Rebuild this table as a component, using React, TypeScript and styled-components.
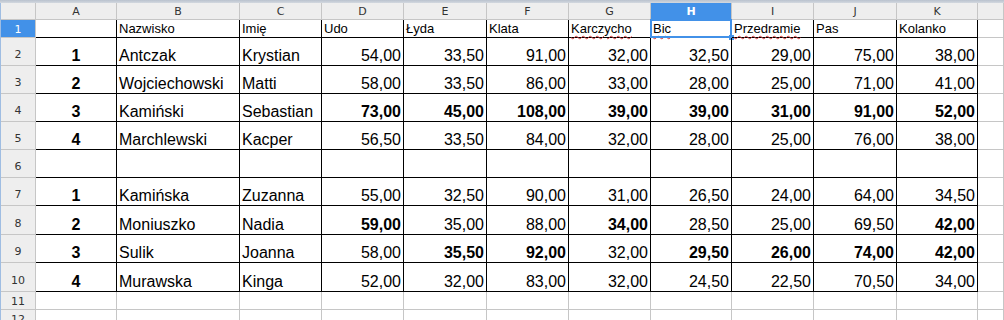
import React from 'react';
import styled, { createGlobalStyle, css } from 'styled-components';

const GlobalStyle = createGlobalStyle`
  html, body {
    margin: 0;
    padding: 0;
    background: #ffffff;
    overflow: hidden;
  }
  body {
    font-family: "Liberation Sans", Arial, sans-serif;
  }
`;

const GRID = '#c6c6c6';
const SELECT = '#4291e8';

const colWidths = [35, 81, 123, 82, 82, 83, 82, 82, 81, 82, 83, 81, 26];
const rowHeights = [17, 18, 28, 28, 28, 28, 28, 28, 29, 28, 29, 18, 18];

const Window = styled.div`
  width: 1004px;
  height: 320px;
  overflow: hidden;
  display: flex;
  flex-direction: column;
`;

const TopStrip = styled.div`
  height: 3px;
  flex: none;
  background: linear-gradient(#b9c2ce, #d3d8df);
`;

const Sheet = styled.div`
  display: grid;
  grid-template-columns: ${colWidths.map((w) => `${w}px`).join(' ')};
  grid-template-rows: ${rowHeights.map((h) => `${h}px`).join(' ')};
  border-left: 1px solid #9fbde2;
`;

const HeaderCell = styled.div<{ $active?: boolean }>`
  box-sizing: border-box;
  display: flex;
  align-items: center;
  justify-content: center;
  background: ${(p) => (p.$active ? SELECT : '#eeeeee')};
  color: ${(p) => (p.$active ? '#ffffff' : '#333333')};
  font-weight: ${(p) => (p.$active ? 'bold' : 'normal')};
  font-family: "DejaVu Sans", "Liberation Sans", sans-serif;
  font-size: 11px;
  border-right: 1px solid ${GRID};
  border-bottom: 1px solid ${GRID};
`;

const RowHead = styled(HeaderCell)<{ $tall?: boolean }>`
  align-items: flex-end;
  padding-bottom: ${(p) => (p.$tall ? '4px' : '1px')};
  font-weight: normal;
`;

const Cell = styled.div<{
  $framed?: boolean;
  $align?: 'left' | 'right' | 'center';
  $bold?: boolean;
  $small?: boolean;
}>`
  position: relative;
  box-sizing: border-box;
  display: flex;
  align-items: flex-end;
  justify-content: ${(p) =>
    p.$align === 'right' ? 'flex-end' : p.$align === 'center' ? 'center' : 'flex-start'};
  padding: 0 2px 0 2px;
  overflow: visible;
  white-space: nowrap;
  color: #000000;
  font-size: ${(p) => (p.$small ? '13px' : '16px')};
  line-height: ${(p) => (p.$small ? '16px' : '18px')};
  font-weight: ${(p) => (p.$bold ? 'bold' : 'normal')};
  border-right: 1px solid ${(p) => (p.$framed ? '#000000' : GRID)};
  border-bottom: 1px solid ${(p) => (p.$framed ? '#000000' : GRID)};
`;

const Text = styled.span<{ $wavy?: boolean }>`
  ${(p) =>
    p.$wavy &&
    css`
      text-decoration: underline wavy #d43a3a;
      text-decoration-thickness: 1px;
      text-underline-offset: 2px;
    `}
`;

const Cursor = styled.div`
  position: absolute;
  left: -1px;
  top: -1px;
  right: -1px;
  bottom: -1px;
  border: 2px solid ${SELECT};
  pointer-events: none;

  &::after {
    content: '';
    position: absolute;
    right: -4px;
    bottom: -4px;
    width: 5px;
    height: 5px;
    background: ${SELECT};
  }
`;

const columns = ['A', 'B', 'C', 'D', 'E', 'F', 'G', 'H', 'I', 'J', 'K', ''];

const titles = ['', 'Nazwisko', 'Imię', 'Udo', 'Łyda', 'Klata', 'Karczycho', 'Bic', 'Przedramie', 'Pas', 'Kolanko'];
const wavy = ['Karczycho', 'Bic', 'Przedramie'];

// "*" marks a bold value
const data: string[][] = [
  ['1', 'Antczak', 'Krystian', '54,00', '33,50', '91,00', '32,00', '32,50', '29,00', '75,00', '38,00'],
  ['2', 'Wojciechowski', 'Matti', '58,00', '33,50', '86,00', '33,00', '28,00', '25,00', '71,00', '41,00'],
  ['3', 'Kamiński', 'Sebastian', '*73,00', '*45,00', '*108,00', '*39,00', '*39,00', '*31,00', '*91,00', '*52,00'],
  ['4', 'Marchlewski', 'Kacper', '56,50', '33,50', '84,00', '32,00', '28,00', '25,00', '76,00', '38,00'],
  [],
  ['1', 'Kamińska', 'Zuzanna', '55,00', '32,50', '90,00', '31,00', '26,50', '24,00', '64,00', '34,50'],
  ['2', 'Moniuszko', 'Nadia', '*59,00', '35,00', '88,00', '*34,00', '28,50', '25,00', '69,50', '*42,00'],
  ['3', 'Sulik', 'Joanna', '58,00', '*35,50', '*92,00', '32,00', '*29,50', '*26,00', '*74,00', '*42,00'],
  ['4', 'Murawska', 'Kinga', '52,00', '32,00', '83,00', '32,00', '24,50', '22,50', '70,50', '34,00'],
];

const App: React.FC = () => {
  const renderRow = (rowNo: number, values: string[], small: boolean) => {
    const framed = rowNo <= 10;
    return (
      <React.Fragment key={rowNo}>
        <RowHead $active={rowNo === 1} $tall={rowNo >= 2 && rowNo <= 10}>
          {rowNo}
        </RowHead>
        {columns.map((col, i) => {
          const raw = values[i] ?? '';
          const bold = raw.startsWith('*') || (i === 0 && raw !== '' && !small);
          const value = raw.replace('*', '');
          const align = i === 0 ? 'center' : i >= 3 && !small ? 'right' : 'left';
          return (
            <Cell
              key={col || 'L'}
              $framed={framed && col !== ''}
              $align={align}
              $bold={bold}
              $small={small}
            >
              <Text $wavy={small && wavy.includes(value)}>{value}</Text>
              {rowNo === 1 && col === 'H' && <Cursor />}
            </Cell>
          );
        })}
      </React.Fragment>
    );
  };

  return (
    <>
      <GlobalStyle />
      <Window>
        <TopStrip />
        <Sheet>
          <HeaderCell />
          {columns.map((col) => (
            <HeaderCell key={col || 'L'} $active={col === 'H'}>
              {col}
            </HeaderCell>
          ))}
          {renderRow(1, titles, true)}
          {data.map((row, i) => renderRow(i + 2, row, false))}
          {renderRow(11, [], true)}
          {renderRow(12, [], true)}
        </Sheet>
      </Window>
    </>
  );
};

export default App;
